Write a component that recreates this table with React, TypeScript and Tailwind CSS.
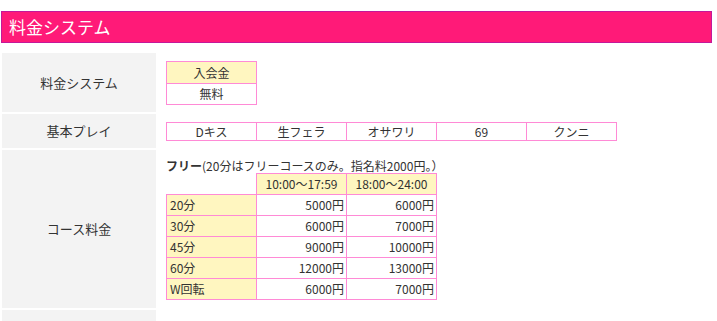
const font = "font-['Noto_Sans_CJK_JP','Noto_Sans',sans-serif]";

const plays = ["Dキス", "生フェラ", "オサワリ", "69", "クンニ"];

const courses = [
  { name: "20分", day: "5000円", night: "6000円" },
  { name: "30分", day: "6000円", night: "7000円" },
  { name: "45分", day: "9000円", night: "10000円" },
  { name: "60分", day: "12000円", night: "13000円" },
  { name: "W回転", day: "6000円", night: "7000円" },
];

function Row({ label, h, children }: { label: string; h: string; children: React.ReactNode }) {
  return (
    <div className={`flex ${h}`}>
      <div className="flex w-[154px] shrink-0 items-center justify-center bg-[#f3f3f3] text-[13px] text-[#333]">
        {label}
      </div>
      <div className="flex-1 overflow-hidden pl-[10px] pt-2">{children}</div>
    </div>
  );
}

export default function App() {
  return (
    <div className={`${font} h-[321px] w-[717px] overflow-hidden bg-white text-[#333]`}>
      <h2 className="ml-px mt-[11px] flex h-8 w-[711px] items-center border border-[#c4189a] bg-[#ff1a78] pl-[7px] text-[17px] font-normal text-white">
        料金システム
      </h2>

      <div className="ml-[2px] mt-[10px] flex flex-col gap-[2px]">
        <Row label="料金システム" h="h-[59px]">
          <table className="w-[91px] table-fixed border-collapse text-center text-xs leading-4">
            <tbody>
              <tr>
                <td className="h-[22px] border border-[#ff8ad6] bg-[#fff6c0] p-0">入会金</td>
              </tr>
              <tr>
                <td className="h-[21px] border border-[#ff8ad6] p-0">無料</td>
              </tr>
            </tbody>
          </table>
        </Row>

        <Row label="基本プレイ" h="h-[34px]">
          <table className="w-[451px] table-fixed border-collapse text-center text-xs">
            <tbody>
              <tr>
                {plays.map((p) => (
                  <td key={p} className="h-[18px] border border-[#ff8ad6] p-0 leading-4">
                    {p}
                  </td>
                ))}
              </tr>
            </tbody>
          </table>
        </Row>

        <Row label="コース料金" h="h-[158px]">
          <p className="h-[15px] text-xs leading-[15px]">
            <span className="font-semibold">フリー</span>(20分はフリーコースのみ。指名料2000円。）
          </p>
          <table className="w-[271px] table-fixed border-collapse text-xs leading-4">
            <tbody>
              <tr>
                <td className="h-[21px] p-0"></td>
                <td className="h-[21px] border border-[#ff8ad6] bg-[#fff6c0] p-0 text-center">10:00～17:59</td>
                <td className="h-[21px] border border-[#ff8ad6] bg-[#fff6c0] p-0 text-center">18:00～24:00</td>
              </tr>
              {courses.map((c) => (
                <tr key={c.name}>
                  <td className="h-[21px] border border-[#ff8ad6] bg-[#fff6c0] py-0 pl-[3px]">{c.name}</td>
                  <td className="h-[21px] border border-[#ff8ad6] py-0 pr-[2px] text-right">{c.day}</td>
                  <td className="h-[21px] border border-[#ff8ad6] py-0 pr-[2px] text-right">{c.night}</td>
                </tr>
              ))}
            </tbody>
          </table>
        </Row>

        <Row label="オプション" h="h-[60px]">
          <p className="text-xs leading-5">※延長は30分 6000円、指名料は2000円、本指名は3000円</p>
        </Row>
      </div>
    </div>
  );
}
